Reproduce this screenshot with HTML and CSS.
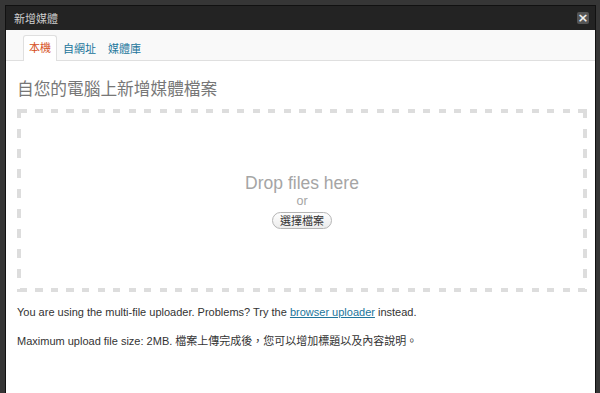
FILE: index.html
```html
<!DOCTYPE html>
<html>
<head>
<meta charset="utf-8">
<link rel="stylesheet" href="styles.css">
</head>
<body>
<div class="modal">
  <div class="titlebar">
    <span class="title">新增媒體</span>
    <span class="close">×</span>
  </div>
  <div class="tabs">
    <span class="tab active">本機</span>
    <span class="tab">自網址</span>
    <span class="tab">媒體庫</span>
  </div>
  <div class="content">
    <h3 class="heading">自您的電腦上新增媒體檔案</h3>
    <div class="dropzone">
      <div class="drop-text">Drop files here</div>
      <div class="or">or</div>
      <span class="btn">選擇檔案</span>
    </div>
    <p class="note">You are using the multi-file uploader. Problems? Try the <a href="#">browser uploader</a> instead.</p>
    <p class="note">Maximum upload file size: 2MB. 檔案上傳完成後，您可以增加標題以及內容說明。</p>
  </div>
</div>
</body>
</html>
```
FILE: styles.css
```css
html, body {
  margin: 0;
  height: 100%;
}
body {
  background: #363636;
  padding: 5px 4px 0 5px;
  box-sizing: border-box;
  font-family: "Liberation Sans", Arial, "Noto Sans CJK TC", sans-serif;
  overflow: hidden;
}
.modal {
  border: 1px solid #111;
  border-bottom: none;
  background: #fff;
  height: 400px;
}
.titlebar {
  background: #232323;
  height: 24px;
  display: flex;
  align-items: center;
  justify-content: space-between;
  padding: 0 6px 0 8px;
}
.title {
  color: #cfcfcf;
  font-size: 11px;
  font-family: "Noto Sans CJK TC", sans-serif;
}
.close {
  width: 12px;
  height: 12px;
  background: #555;
  border-radius: 2px;
  color: #eee;
  font-size: 13px;
  font-weight: bold;
  line-height: 12px;
  text-align: center;
  font-family: "DejaVu Sans", sans-serif;
}
.tabs {
  background: #f9f9f9;
  border-bottom: 1px solid #dfdfdf;
  height: 31px;
  box-sizing: border-box;
  display: flex;
  align-items: flex-end;
  padding-left: 17px;
}
.tab {
  font-family: "Noto Sans CJK TC", sans-serif;
  font-size: 11px;
  color: #21759b;
  padding: 0 5px;
  height: 25px;
  line-height: 23px;
  box-sizing: border-box;
  margin-bottom: -1px;
  border: 1px solid transparent;
  border-bottom: none;
}
.tab.active {
  color: #d54e21;
  background: #fff;
  border-color: #dfdfdf;
  border-radius: 3px 3px 0 0;
  height: 26px;
  line-height: 22px;
}
.content {
  padding: 15px 8px 0 11px;
}
.heading {
  margin: 0;
  font-family: "Noto Sans CJK TC", sans-serif;
  font-weight: normal;
  font-size: 16.7px;
  line-height: 24px;
  color: #777;
}
.dropzone {
  margin-top: 9px;
  height: 183px;
  box-sizing: border-box;
  background-image:
    repeating-linear-gradient(to right, transparent 0 3px, #dddddd 3px 10px, transparent 10px 15.5px),
    repeating-linear-gradient(to right, transparent 0 3px, #dddddd 3px 10px, transparent 10px 15.5px),
    repeating-linear-gradient(to bottom, #dddddd 0 9px, transparent 9px 20px),
    repeating-linear-gradient(to bottom, #dddddd 0 9px, transparent 9px 20px);
  background-size: 100% 4px, 100% 4px, 4px 100%, 4px 100%;
  background-position: 0 0, 0 100%, 0 0, 100% 0;
  background-repeat: no-repeat;
  display: flex;
  flex-direction: column;
  align-items: center;
  justify-content: center;
}
.drop-text {
  font-size: 17.5px;
  line-height: 22px;
  color: #a5a5a5;
}
.or {
  font-size: 12.5px;
  line-height: 14px;
  color: #a5a5a5;
}
.btn {
  margin-top: 4px;
  font-family: "Noto Sans CJK TC", sans-serif;
  font-size: 11px;
  line-height: 15px;
  color: #333;
  padding: 0 7px;
  border: 1px solid #b5b5b5;
  border-radius: 10px;
  background: linear-gradient(#fefefe, #ececec);
}
.note {
  margin: 11px 0 6px;
  font-size: 11px;
  line-height: 18px;
  color: #333;
}
.note a {
  color: #21759b;
}
```
